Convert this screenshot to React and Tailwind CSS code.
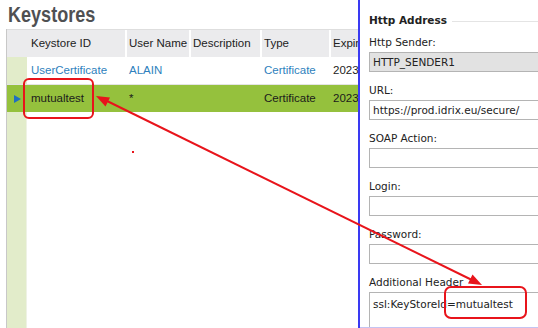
import React from "react";

const cols = [
  { w: "w-[98px]", label: "Keystore ID" },
  { w: "w-[64px]", label: "User Name" },
  { w: "w-[71px]", label: "Description" },
  { w: "w-[69px]", label: "Type" },
  { w: "flex-1", label: "Expiration" },
];

function Field({ label, value, gray, tall }) {
  return (
    <div className="flex flex-col">
      <div className="h-[14px] leading-[14px] text-[#222]">{label}</div>
      <div
        className={
          "mt-[3px] w-[220px] border border-[#b4b4b4] pl-[3px] whitespace-nowrap " +
          (tall ? "h-[60px] pt-[3px] leading-[16px] " : "h-[20px] leading-[18px] ") +
          (gray ? "bg-[#e2e2e2]" : "bg-white")
        }
      >
        {value}
      </div>
    </div>
  );
}

export default function App() {
  return (
    <div className="relative w-[538px] h-[328px] overflow-hidden bg-white flex">
      {/* Left: Keystores grid */}
      <div className="w-[358px] shrink-0 flex flex-col" style={{ fontFamily: '"Liberation Sans", Arial, sans-serif' }}>
        <div className="h-[29px] pl-[8px] leading-[29px] text-[#4f5052]">
          <span className="inline-block origin-left scale-x-[0.82] text-[22px] font-bold">Keystores</span>
        </div>
        <div className="flex-1 ml-[6px] border-l border-[#c8c8c8] flex flex-col text-[11.5px] text-[#222] overflow-hidden">
          {/* header */}
          <div className="flex h-[28px] shrink-0 bg-[#ebebed] border-t border-[#dedede] items-stretch">
            <div className="w-[20px] shrink-0" />
            {cols.map((c, i) => (
              <div
                key={c.label}
                className={
                  c.w +
                  " shrink-0 flex items-center whitespace-nowrap overflow-hidden " +
                  (i === 0 ? "pl-[4px]" : "pl-[2px] border-l-2 border-white")
                }
              >
                {c.label}
              </div>
            ))}
          </div>
          {/* row 1 */}
          <div className="flex h-[28px] shrink-0 items-stretch border-b border-[#e4e4e4]">
            <div className="w-[20px] shrink-0 bg-[#e2ecca]" />
            <div className="w-[98px] shrink-0 flex items-center pl-[4px] text-[#2e7fbd]">UserCertificate</div>
            <div className="w-[64px] shrink-0 flex items-center pl-[4px] text-[#2e7fbd]">ALAIN</div>
            <div className="w-[71px] shrink-0" />
            <div className="w-[69px] shrink-0 flex items-center pl-[4px] text-[#2e7fbd]">Certificate</div>
            <div className="flex-1 flex items-center pl-[4px] whitespace-nowrap overflow-hidden">2023-</div>
          </div>
          {/* row 2 selected */}
          <div className="flex h-[27px] shrink-0 items-stretch bg-[#95c13d] text-[#1b1b1b]">
            <div className="w-[20px] shrink-0 flex items-center justify-center">
              <svg width="7" height="8" viewBox="0 0 7 8">
                <path d="M0 0 L7 4 L0 8 Z" fill="#1f6fc0" />
              </svg>
            </div>
            <div className="w-[98px] shrink-0 flex items-center pl-[4px]">mutualtest</div>
            <div className="w-[64px] shrink-0 flex items-center pl-[4px]">*</div>
            <div className="w-[71px] shrink-0" />
            <div className="w-[69px] shrink-0 flex items-center pl-[4px]">Certificate</div>
            <div className="flex-1 flex items-center pl-[4px] whitespace-nowrap overflow-hidden">2023-</div>
          </div>
          {/* filler */}
          <div className="flex-1 flex">
            <div className="w-[20px] shrink-0 bg-[#e2ecca] border-r border-[#eef2e4]" />
          </div>
        </div>
      </div>

      {/* divider */}
      <div className="w-[2px] shrink-0 bg-[#3a3af2]" />

      {/* Right: Http address form */}
      <div
        className="flex-1 overflow-hidden pl-[9px] pt-[14px] text-[10.5px] text-[#222] border-b border-[#c4c4f2]"
        style={{ fontFamily: '"DejaVu Sans", Verdana, sans-serif' }}
      >
        <div className="flex items-center gap-[5px] h-[14px]">
          <span className="font-bold whitespace-nowrap">Http Address</span>
          <div className="flex-1 h-px bg-[#e4e4e4]" />
        </div>
        <div className="mt-[7px] flex flex-col gap-[11px]">
          <Field label="Http Sender:" value="HTTP_SENDER1" gray />
          <Field label="URL:" value="https://prod.idrix.eu/secure/" />
          <Field label="SOAP Action:" value="" />
          <Field label="Login:" value="" />
          <Field label="Password:" value="" />
          <Field label="Additional Header" value="ssl:KeyStoreId=mutualtest" tall />
        </div>
      </div>

      {/* red annotations overlay */}
      <svg className="absolute inset-0 pointer-events-none" width="538" height="328" viewBox="0 0 538 328">
        <rect x="24" y="79" width="69" height="39" rx="5" fill="none" stroke="#e8141b" strokeWidth="2" />
        <rect x="445" y="287" width="81" height="31" rx="6" fill="none" stroke="#e8141b" strokeWidth="2" />
        <line x1="104" y1="99.5" x2="474" y2="281" stroke="#e8141b" strokeWidth="2" />
        <path d="M96 96 L110 97.5 L105.5 106.5 Z" fill="#e8141b" />
        <path d="M482 285 L468 283.5 L472.5 274.5 Z" fill="#e8141b" />
        <rect x="132" y="151" width="2" height="2" fill="#e8141b" />
      </svg>
    </div>
  );
}
